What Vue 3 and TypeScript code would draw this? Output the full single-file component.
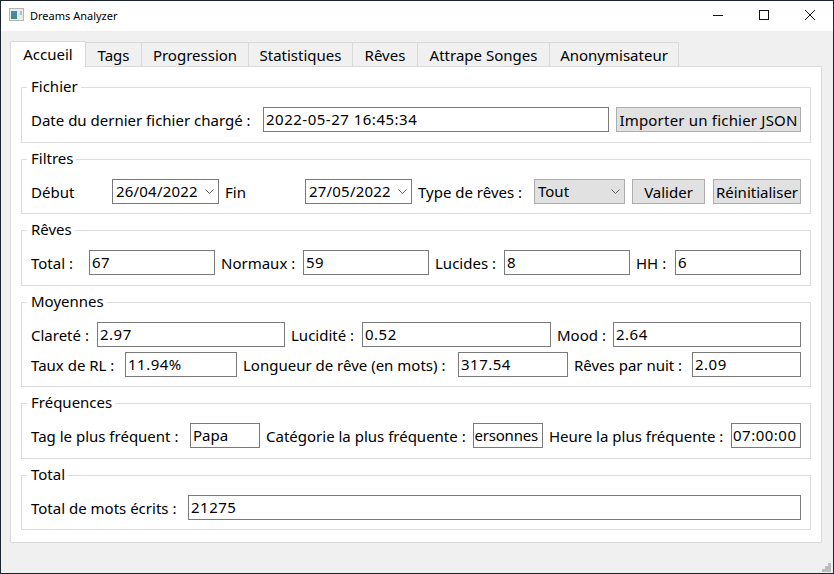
<script setup lang="ts">
const tabs: string[] = ['Accueil', 'Tags', 'Progression', 'Statistiques', 'Rêves', 'Attrape Songes', 'Anonymisateur']
</script>

<template>
  <div class="window">
    <header class="titlebar">
      <svg class="app-icon" width="16" height="16" viewBox="0 0 16 16">
        <defs>
          <linearGradient id="pic" x1="0" y1="0" x2="0" y2="1">
            <stop offset="0" stop-color="#4a86b8" />
            <stop offset="1" stop-color="#3f8f78" />
          </linearGradient>
        </defs>
        <rect x="0.5" y="0.5" width="14" height="12" fill="#ececec" stroke="#b4b4b4" />
        <rect x="2" y="3" width="6" height="8" fill="url(#pic)" />
        <rect x="8" y="3" width="3" height="8" fill="#e2e8e4" />
        <rect x="11" y="3" width="2" height="4" fill="#a9c6bb" />
      </svg>
      <span class="title">Dreams Analyzer</span>
      <div class="controls">
        <button class="control" aria-label="Réduire">
          <svg width="12" height="12" viewBox="0 0 12 12"><path d="M1 6.5h10" stroke="#111" fill="none" /></svg>
        </button>
        <button class="control" aria-label="Agrandir">
          <svg width="12" height="12" viewBox="0 0 12 12"><rect x="1.5" y="1.5" width="9" height="9" stroke="#111" fill="none" /></svg>
        </button>
        <button class="control" aria-label="Fermer">
          <svg width="12" height="12" viewBox="0 0 12 12"><path d="M1 1l10 10M11 1L1 11" stroke="#111" fill="none" /></svg>
        </button>
      </div>
    </header>

    <main class="content">
      <nav class="tabs">
        <div v-for="(t, i) in tabs" :key="t" class="tab" :class="{ active: i === 0 }">{{ t }}</div>
      </nav>

      <section class="pane">
        <fieldset class="group">
          <legend>Fichier</legend>
          <div class="row r-fichier">
            <span>Date du dernier fichier chargé :</span>
            <div class="field num">2022-05-27 16:45:34</div>
            <button class="btn nudge-1">Importer un fichier JSON</button>
          </div>
        </fieldset>

        <fieldset class="group">
          <legend>Filtres</legend>
          <div class="row r-filtres">
            <span>Début</span>
            <div class="field date">26/04/2022<svg class="chev" width="9" height="5" viewBox="0 0 9 5"><path d="M0.5 0.5l4 4 4-4" /></svg></div>
            <span>Fin</span>
            <div class="field date">27/05/2022<svg class="chev" width="9" height="5" viewBox="0 0 9 5"><path d="M0.5 0.5l4 4 4-4" /></svg></div>
            <span>Type de rêves :</span>
            <div class="combo">Tout<svg class="chev" width="9" height="5" viewBox="0 0 9 5"><path d="M0.5 0.5l4 4 4-4" /></svg></div>
            <button class="btn nudge-1">Valider</button>
            <button class="btn nudge-2">Réinitialiser</button>
          </div>
        </fieldset>

        <fieldset class="group">
          <legend>Rêves</legend>
          <div class="row r-reves">
            <span>Total :</span><div class="field num">67</div>
            <span>Normaux :</span><div class="field num">59</div>
            <span>Lucides :</span><div class="field num">8</div>
            <span>HH :</span><div class="field num">6</div>
          </div>
        </fieldset>

        <fieldset class="group">
          <legend>Moyennes</legend>
          <div class="row r-moy1">
            <span>Clareté :</span><div class="field num">2.97</div>
            <span>Lucidité :</span><div class="field num">0.52</div>
            <span>Mood :</span><div class="field num">2.64</div>
          </div>
          <div class="row r-moy2">
            <span>Taux de RL :</span><div class="field num">11.94%</div>
            <span>Longueur de rêve (en mots) :</span><div class="field num">317.54</div>
            <span>Rêves par nuit :</span><div class="field num">2.09</div>
          </div>
        </fieldset>

        <fieldset class="group">
          <legend>Fréquences</legend>
          <div class="row r-freq">
            <span>Tag le plus fréquent :</span><div class="field">Papa</div>
            <span>Catégorie la plus fréquente :</span><div class="field clipped"><span>Personnes</span></div>
            <span>Heure la plus fréquente :</span><div class="field num tight">07:00:00</div>
          </div>
        </fieldset>

        <fieldset class="group">
          <legend>Total</legend>
          <div class="row r-total">
            <span>Total de mots écrits :</span><div class="field num">21275</div>
          </div>
        </fieldset>
      </section>
    </main>

    <svg class="grip" width="10" height="10" viewBox="0 0 10 10" fill="#bcbcbc">
      <rect x="6" y="0" width="3" height="3" /><rect x="3" y="3" width="3" height="3" /><rect x="6" y="3" width="3" height="3" />
      <rect x="0" y="6" width="3" height="3" /><rect x="3" y="6" width="3" height="3" /><rect x="6" y="6" width="3" height="3" />
    </svg>
  </div>
</template>

<style>
html, body { margin: 0; background: #1c2430; }
</style>

<style scoped>
.window {
  position: relative;
  box-sizing: border-box;
  width: 832px;
  height: 572px;
  margin: 1px;
  display: flex;
  flex-direction: column;
  background: #f0f0f0;
  color: #000;
  font-family: "Noto Sans", sans-serif;
  font-size: 15px;
  overflow: hidden;
}
.titlebar {
  height: 30px;
  flex: none;
  display: flex;
  align-items: center;
  background: #fff;
  padding-left: 8px;
}
.app-icon { margin-right: 5px; }
.title { font-size: 11px; margin-bottom: 2px; }
.controls { margin-left: auto; display: flex; align-self: stretch; }
.control {
  width: 46px;
  border: 0;
  padding: 0 0 2px;
  background: none;
  display: flex;
  align-items: center;
  justify-content: center;
}
.content {
  flex: 1;
  padding: 10px 11px 0 9px;
  display: flex;
  flex-direction: column;
}
.tabs {
  display: grid;
  grid-template-columns: 76px 56px 107px 104px 65px 132px 129px;
  justify-content: start;
  height: 26px;
  align-items: end;
  position: relative;
  z-index: 1;
}
.tab {
  box-sizing: border-box;
  height: 25px;
  border: 1px solid #d9d9d9;
  border-left-width: 0;
  line-height: 24px;
  text-align: center;
  background: #f0f0f0;
}
.tab.active {
  height: 26px;
  border-left-width: 1px;
  border-bottom: 0;
  background: #fff;
  line-height: 25px;
}
.pane {
  box-sizing: border-box;
  height: 477px;
  margin-top: -1px;
  padding: 9px 10px 0;
  background: #fff;
  border: 1px solid #d9d9d9;
  display: flex;
  flex-direction: column;
  gap: 5px;
}
.group {
  margin: 0;
  padding: 9px;
  border: 1px solid #dcdcdc;
  min-width: 0;
  display: flex;
  flex-direction: column;
  gap: 5px;
}
.group:nth-child(odd) { padding-bottom: 10px; }
legend {
  margin-left: -4px;
  padding: 0 3px 0 4px;
  height: 22px;
  line-height: 20px;
}
.row {
  display: grid;
  column-gap: 6px;
  height: 25px;
  align-items: center;
  white-space: nowrap;
}
.r-fichier { grid-template-columns: 226px 346px 186px; }
.r-filtres { grid-template-columns: 75px 107px 74px 107px 110px 91px 74px 90px; }
.r-reves { grid-template-columns: 52px 126px 76px 126px 63px 126px 33px 126px; }
.r-moy1 { grid-template-columns: 60px 188px 65px 189px 50px 188px; }
.r-moy2 { grid-template-columns: 88px 112px 209px 110px 112px 109px; }
.r-freq { grid-template-columns: 153px 70px 201px 70px 176px 70px; }
.r-total { grid-template-columns: 151px 613px; }
.field, .combo, .btn {
  box-sizing: border-box;
  height: 25px;
  line-height: 23px;
}
.field {
  border: 1px solid #7a7a7a;
  background: #fff;
  padding: 0 2px;
  overflow: hidden;
}
.num { letter-spacing: 0.5px; }
.field.date, .combo {
  display: flex;
  align-items: center;
  justify-content: space-between;
}
.field.date { padding: 0 4px 0 3px; letter-spacing: 0.2px; }
.combo {
  border: 1px solid #adadad;
  background: #e1e1e1;
  padding: 0 4px 0 3px;
}
.chev { fill: none; stroke: #606060; flex: none; }
.btn {
  border: 1px solid #adadad;
  background: #e1e1e1;
  padding: 0;
  font: inherit;
  color: inherit;
  white-space: nowrap;
}
.r-fichier .btn { letter-spacing: 0.2px; }
.nudge-1 { margin-left: 1px; }
.nudge-2 { margin-left: 2px; }
.clipped { display: flex; justify-content: flex-end; padding: 0 4px 0 0; letter-spacing: -0.2px; }
.clipped span { flex: none; }
.tight { padding: 0 1px; }
.grip { position: absolute; right: 1px; bottom: 0; }
</style>
